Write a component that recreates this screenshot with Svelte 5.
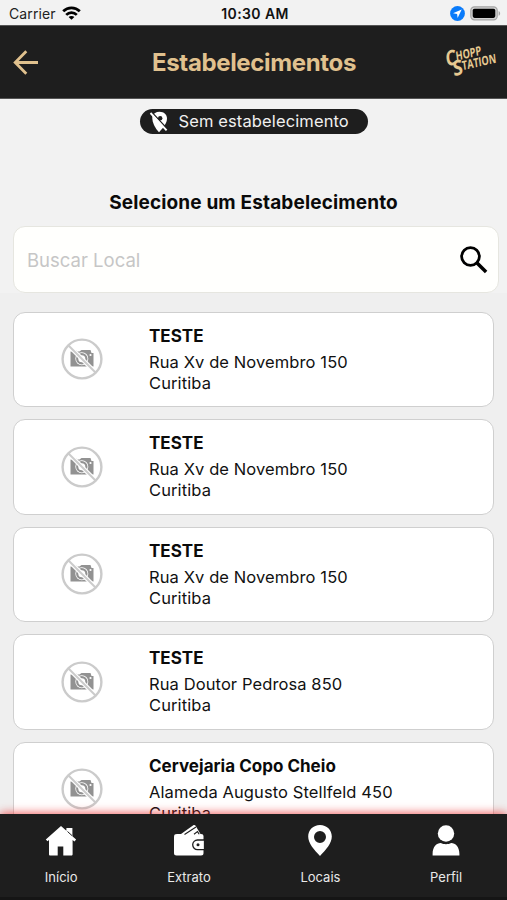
<script>
  const places = [
    { name: 'TESTE', street: 'Rua Xv de Novembro 150', city: 'Curitiba' },
    { name: 'TESTE', street: 'Rua Xv de Novembro 150', city: 'Curitiba' },
    { name: 'TESTE', street: 'Rua Xv de Novembro 150', city: 'Curitiba' },
    { name: 'TESTE', street: 'Rua Doutor Pedrosa 850', city: 'Curitiba' },
    { name: 'Cervejaria Copo Cheio', street: 'Alameda Augusto Stellfeld 450', city: 'Curitiba' }
  ];
</script>

<div class="screen">
  <div class="status">
    <div class="carrier">
      <span>Carrier</span>
      <svg width="19" height="14" viewBox="0 0 19 14">
        <g fill="none" stroke="#000" stroke-width="2.7">
          <path d="M1.2 5.3C5.8.7 13.2.7 17.8 5.3" />
          <path d="M4.2 8.9c3-3 7.6-3 10.6 0" />
        </g>
        <path d="M9.5 13.800 6.600 11c1.600-1.400 4.200-1.400 5.800 0z" />
      </svg>
    </div>
    <span class="clock">10:30 AM</span>
    <div class="power">
      <svg width="15" height="15" viewBox="0 0 15 15">
        <circle cx="7.5" cy="7.5" r="7.4" fill="#0a7bfa" />
        <path d="M11.700 3.400 3 7.300l4.100.6.500 4.200z" fill="#fff" />
      </svg>
      <svg width="31" height="15" viewBox="0 0 31 15">
        <rect x=".8" y=".8" width="26.4" height="13" rx="3.6" fill="#d2d2d2" stroke="#a5a5a5" stroke-width="1.2" />
        <rect x="2.7" y="2.7" width="22.6" height="9.2" rx="1.8" />
        <path d="M28.600 5v4.800c2-.8 2-4 0-4.800z" fill="#a5a5a5" />
      </svg>
    </div>
  </div>

  <header>
    <svg class="back" width="26" height="26" viewBox="0 0 26 26" fill="none" stroke="#e0c18e" stroke-width="2.8">
      <path d="M25 12.500H2.500M13.300 1.300 2.200 12.500l11.100 11.200" />
    </svg>
    <h1>Estabelecimentos</h1>
    <svg class="logo" width="54" height="44" viewBox="0 0 54 44" fill="#e6c991">
      <g transform="translate(3.5 25.500) rotate(-13) skewX(-6)">
        <text x="0" y="0" font-size="21" textLength="11" lengthAdjust="spacingAndGlyphs">C</text>
        <text x="10.5" y="-3.5" font-size="12.5" textLength="26" lengthAdjust="spacingAndGlyphs">HOPP</text>
        <text x="6" y="11" font-size="21" textLength="10" lengthAdjust="spacingAndGlyphs">S</text>
        <text x="15.5" y="7.3" font-size="12.5" textLength="35" lengthAdjust="spacingAndGlyphs">TATION</text>
      </g>
    </svg>
  </header>

  <main>
    <div class="pill">
      <svg width="20" height="22" viewBox="0 0 20 22">
        <path d="M3.300 5.500C4.500 2.300 7 .8 10.500.8c4.500 0 7.500 2.800 7.500 6.900 0 3-1.800 6-4.200 9.300L10 21.300C6.500 17.500 3 12 3.300 5.500z" fill="#fff" />
        <circle cx="11.200" cy="7.200" r="2.200" fill="#1e1e1e" />
        <path d="m2.500 1 16.500 17.800" stroke="#1e1e1e" stroke-width="1.500" />
        <path d="M1.500 2 17.600 19.400" stroke="#fff" stroke-width="1.900" />
      </svg>
      <span>Sem estabelecimento</span>
    </div>
    <h2>Selecione um Estabelecimento</h2>
    <div class="search">
      <span>Buscar Local</span>
      <svg width="28" height="28" viewBox="0 0 28 28" fill="none" stroke="#000">
        <circle cx="10.5" cy="10.5" r="8.9" stroke-width="2.8" />
        <path d="m16.800 16.800 9.300 9.300" stroke-width="3.5" />
      </svg>
    </div>
    <div class="list">
      {#each places as place}
        <article>
          <div class="photo">
            <svg width="42" height="42" viewBox="0 0 42 42">
              <path d="M9.500 13.500h3v-1h3v1h3l2-1.500h9l1 3h2v13.500h-23z" fill="#929292" />
              <circle cx="20.8" cy="20.7" r="6.5" fill="#fff" />
              <circle cx="20.8" cy="20.7" r="4.6" fill="none" stroke="#929292" stroke-width="2.2" />
              <circle cx="29.5" cy="17" r="1.1" fill="#fff" />
              <path d="m7 7 28 28" stroke="#fff" stroke-width="4.5" />
              <path d="m7 7 28 28" stroke="#cbcbcb" stroke-width="2" />
              <circle cx="21" cy="21" r="19.4" fill="none" stroke="#cbcbcb" stroke-width="2.4" />
            </svg>
          </div>
          <div class="info">
            <h3>{place.name}</h3>
            <p>{place.street}</p>
            <p>{place.city}</p>
          </div>
        </article>
      {/each}
    </div>
  </main>

  <nav>
    <div class="tab">
      <svg width="32" height="32" viewBox="0 0 32 32" fill="#fff">
        <path d="M16 1 .8 14.500 2.500 16.200 4 15v14.300c0 .8.500 1.200 1.200 1.200h7.500v-9h5.600v9h8c.8 0 1.300-.4 1.300-1.200V15l1.900 1.400 1.600-1.800-3.700-3.400V3h-6v2.800z" />
        <path d="M22.500 6.500 27 10.600" stroke="#1e1e1e" stroke-width="1" />
      </svg>
      <span>Início</span>
    </div>
    <div class="tab">
      <svg width="32" height="32" viewBox="0 0 32 32">
        <path d="M1 11.500C1 9.800 2 9 4 9h24c1.700 0 2.500.8 2.500 2.500v16.600c0 1.700-.8 2.500-2.500 2.500H3.500C1.800 30.600 1 29.800 1 28.100z" fill="#fff" />
        <path d="M8 9 20.300.3c.8-.5 1.800-.3 2.300.5L27.500 9z" fill="#fff" />
        <path d="M11.500 9.500 23 2M21 9.300l3.500-2.700 1.700 2.700" fill="none" stroke="#1e1e1e" stroke-width="1.1" />
        <path d="M31.500 15h-7a4.800 4.800 0 0 0 0 9.600h7z" fill="#fff" stroke="#1e1e1e" stroke-width="1.3" />
        <circle cx="25" cy="19.8" r="1.5" fill="#1e1e1e" />
      </svg>
      <span>Extrato</span>
    </div>
    <div class="tab">
      <svg width="32" height="32" viewBox="0 0 32 32">
        <path d="M16 0C9.200 0 4.200 5 4.200 11.500 4.200 18.500 10 24.500 16 31c6-6.500 11.800-12.500 11.800-19.500C27.800 5 22.800 0 16 0zm0 6a6 6 0 1 1 0 12 6 6 0 0 1 0-12z" fill="#fff" />
      </svg>
      <span>Locais</span>
    </div>
    <div class="tab">
      <svg width="32" height="32" viewBox="0 0 32 32" fill="#fff">
        <circle cx="16" cy="8.5" r="8.2" />
        <path d="M2.600 30.600v-1.800c0-7 4-10.800 8.200-10.800 3 1.600 7.400 1.600 10.400 0 4.200 0 8.200 3.800 8.200 10.800v1.800z" />
      </svg>
      <span>Perfil</span>
    </div>
  </nav>
</div>

<style>
  :global(body) { margin: 0; }
  .screen {
    width: 507px; height: 900px; overflow: hidden;
    display: flex; flex-direction: column;
    background: #f2f2f2; color: #111;
    font-family: Inter, "Liberation Sans", sans-serif;
  }
  h1, h2, h3, p { margin: 0; white-space: nowrap; }
  svg { display: block; flex: none; }
  .status {
    height: 25px; flex: none; box-sizing: border-box; padding: 2px 6px 0 9px;
    display: grid; grid-template-columns: 1fr auto 1fr; align-items: center;
    font-size: 14px; line-height: 23px; white-space: nowrap;
  }
  .carrier { display: flex; align-items: center; gap: 6px; color: #222; letter-spacing: .1px; }
  .carrier svg { margin-top: -2px; }
  .clock { font-weight: 600; font-size: 14px; letter-spacing: .4px; }
  .power { display: flex; justify-content: flex-end; align-items: center; gap: 5px; }
  header {
    height: 74px; flex: none; box-sizing: border-box; padding: 2px 10px 0 13px;
    display: grid; grid-template-columns: 1fr auto 1fr; align-items: center;
    background: #1e1e1e; border-top: 1px solid #555; border-bottom: 1px solid #555;
  }
  h1 { color: #e0c18e; font-size: 24px; line-height: 30px; font-weight: 700; letter-spacing: -.35px; margin-left: -2px; }
  .logo { justify-self: end; overflow: visible; font-family: "Open Sans", "Liberation Sans", sans-serif; font-weight: 700; }
  main { flex: 1; min-height: 0; display: flex; flex-direction: column; align-items: center; overflow: hidden; }
  .pill {
    margin-top: 10px; width: 228px; height: 25px; flex: none; box-sizing: border-box; padding-left: 9px;
    border-radius: 13px; background: #1e1e1e; color: #f0f0f0;
    display: flex; align-items: center; gap: 10px; font-size: 16.5px; letter-spacing: .12px; white-space: nowrap;
  }
  .pill span { line-height: 25px; }
  h2 { margin-top: 57px; font-size: 19px; line-height: 24px; font-weight: 700; letter-spacing: .14px; color: #0a0a0a; }
  .search {
    align-self: stretch; margin: 11px 8px 0 13px; height: 67px; flex: none; box-sizing: border-box;
    padding: 0 10px 0 13px; border: 1px solid #e6e6e0; border-radius: 12px; background: #fffffd;
    display: flex; align-items: center; justify-content: space-between;
    color: #c6c6c6; font-size: 18.5px;
  }
  .search span { padding-top: 1px; }
  .list { align-self: stretch; padding: 18.5px 13px 0; background: #efefef; display: flex; flex-direction: column; gap: 12px; }
  article {
    height: 95.5px; flex: none; box-sizing: border-box; border: 1.5px solid #cfcfcf; border-radius: 12px;
    background: #fff; display: flex;
  }
  .photo { width: 135px; display: flex; align-items: center; justify-content: center; }
  .info { padding-top: 12px; }
  h3 { font-size: 17px; line-height: 22px; font-weight: 700; letter-spacing: .02px; margin-bottom: 5px; color: #0a0a0a; }
  p { font-size: 16.5px; line-height: 21px; letter-spacing: .1px; }
  nav {
    height: 86px; flex: none; box-sizing: border-box; padding-top: 11px; position: relative;
    display: flex; justify-content: space-around; background: #1e1e1e; color: #e9e9e9;
    border-bottom: 3px solid #151515; box-shadow: 0 -1px 9px rgba(235, 40, 40, .75);
  }
  .tab { display: flex; flex-direction: column; align-items: center; gap: 12px; font-size: 13px; line-height: 16px; }
</style>
